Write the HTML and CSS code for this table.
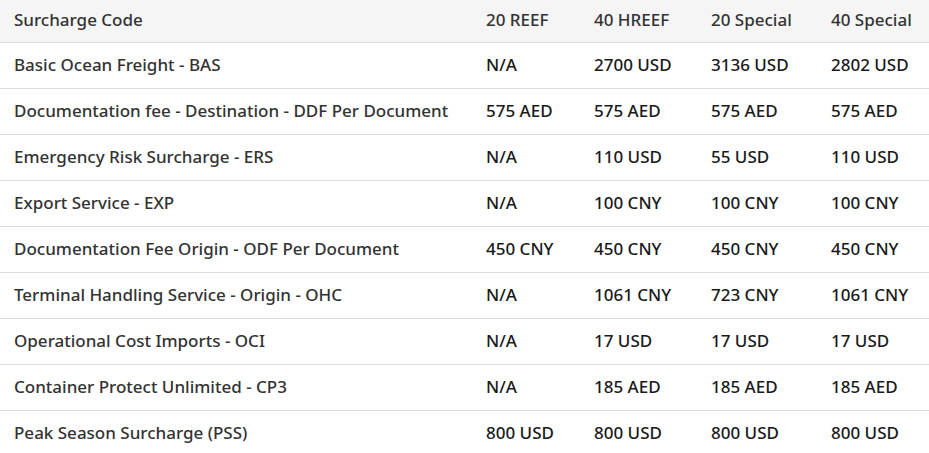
FILE: index.html
```html
<!DOCTYPE html>
<html>
<head>
<meta charset="utf-8">
<link rel="stylesheet" href="styles.css">
</head>
<body>
<table class="rates">
  <colgroup>
    <col class="c-name"><col class="c-a"><col class="c-b"><col class="c-c"><col class="c-d">
  </colgroup>
  <thead>
    <tr><th>Surcharge Code</th><th>20 REEF</th><th>40 HREEF</th><th>20 Special</th><th>40 Special</th></tr>
  </thead>
  <tbody>
    <tr><td class="name">Basic Ocean Freight - BAS</td><td>N/A</td><td>2700 USD</td><td>3136 USD</td><td>2802 USD</td></tr>
    <tr><td class="name">Documentation fee - Destination - DDF Per Document</td><td>575 AED</td><td>575 AED</td><td>575 AED</td><td>575 AED</td></tr>
    <tr><td class="name">Emergency Risk Surcharge - ERS</td><td>N/A</td><td>110 USD</td><td>55 USD</td><td>110 USD</td></tr>
    <tr><td class="name">Export Service - EXP</td><td>N/A</td><td>100 CNY</td><td>100 CNY</td><td>100 CNY</td></tr>
    <tr><td class="name">Documentation Fee Origin - ODF Per Document</td><td>450 CNY</td><td>450 CNY</td><td>450 CNY</td><td>450 CNY</td></tr>
    <tr><td class="name">Terminal Handling Service - Origin - OHC</td><td>N/A</td><td>1061 CNY</td><td>723 CNY</td><td>1061 CNY</td></tr>
    <tr><td class="name">Operational Cost Imports - OCI</td><td>N/A</td><td>17 USD</td><td>17 USD</td><td>17 USD</td></tr>
    <tr><td class="name">Container Protect Unlimited - CP3</td><td>N/A</td><td>185 AED</td><td>185 AED</td><td>185 AED</td></tr>
    <tr><td class="name">Peak Season Surcharge (PSS)</td><td>800 USD</td><td>800 USD</td><td>800 USD</td><td>800 USD</td></tr>
  </tbody>
</table>
</body>
</html>
```
FILE: styles.css
```css
html, body {
  margin: 0;
  padding: 0;
  background: #ffffff;
}
body {
  font-family: "Noto Sans", "Open Sans", sans-serif;
  font-size: 17px;
  font-weight: 500;
  color: #333;
}
.rates {
  width: 929px;
  border-collapse: collapse;
  table-layout: fixed;
}
.c-name { width: 472px; }
.c-a { width: 108px; }
.c-b { width: 117px; }
.c-c { width: 120px; }
.c-d { width: 112px; }
.rates th, .rates td {
  text-align: left;
  padding: 0 0 3px 14px;
  white-space: nowrap;
  border-bottom: 1px solid #dcdcdc;
}
.rates thead th {
  background: #f5f5f5;
  font-weight: 500;
  height: 39px;
  color: #333;
}
.rates td {
  height: 42px;
  color: #1a1a1a;
}
.rates td.name {
  color: #333;
}
```
